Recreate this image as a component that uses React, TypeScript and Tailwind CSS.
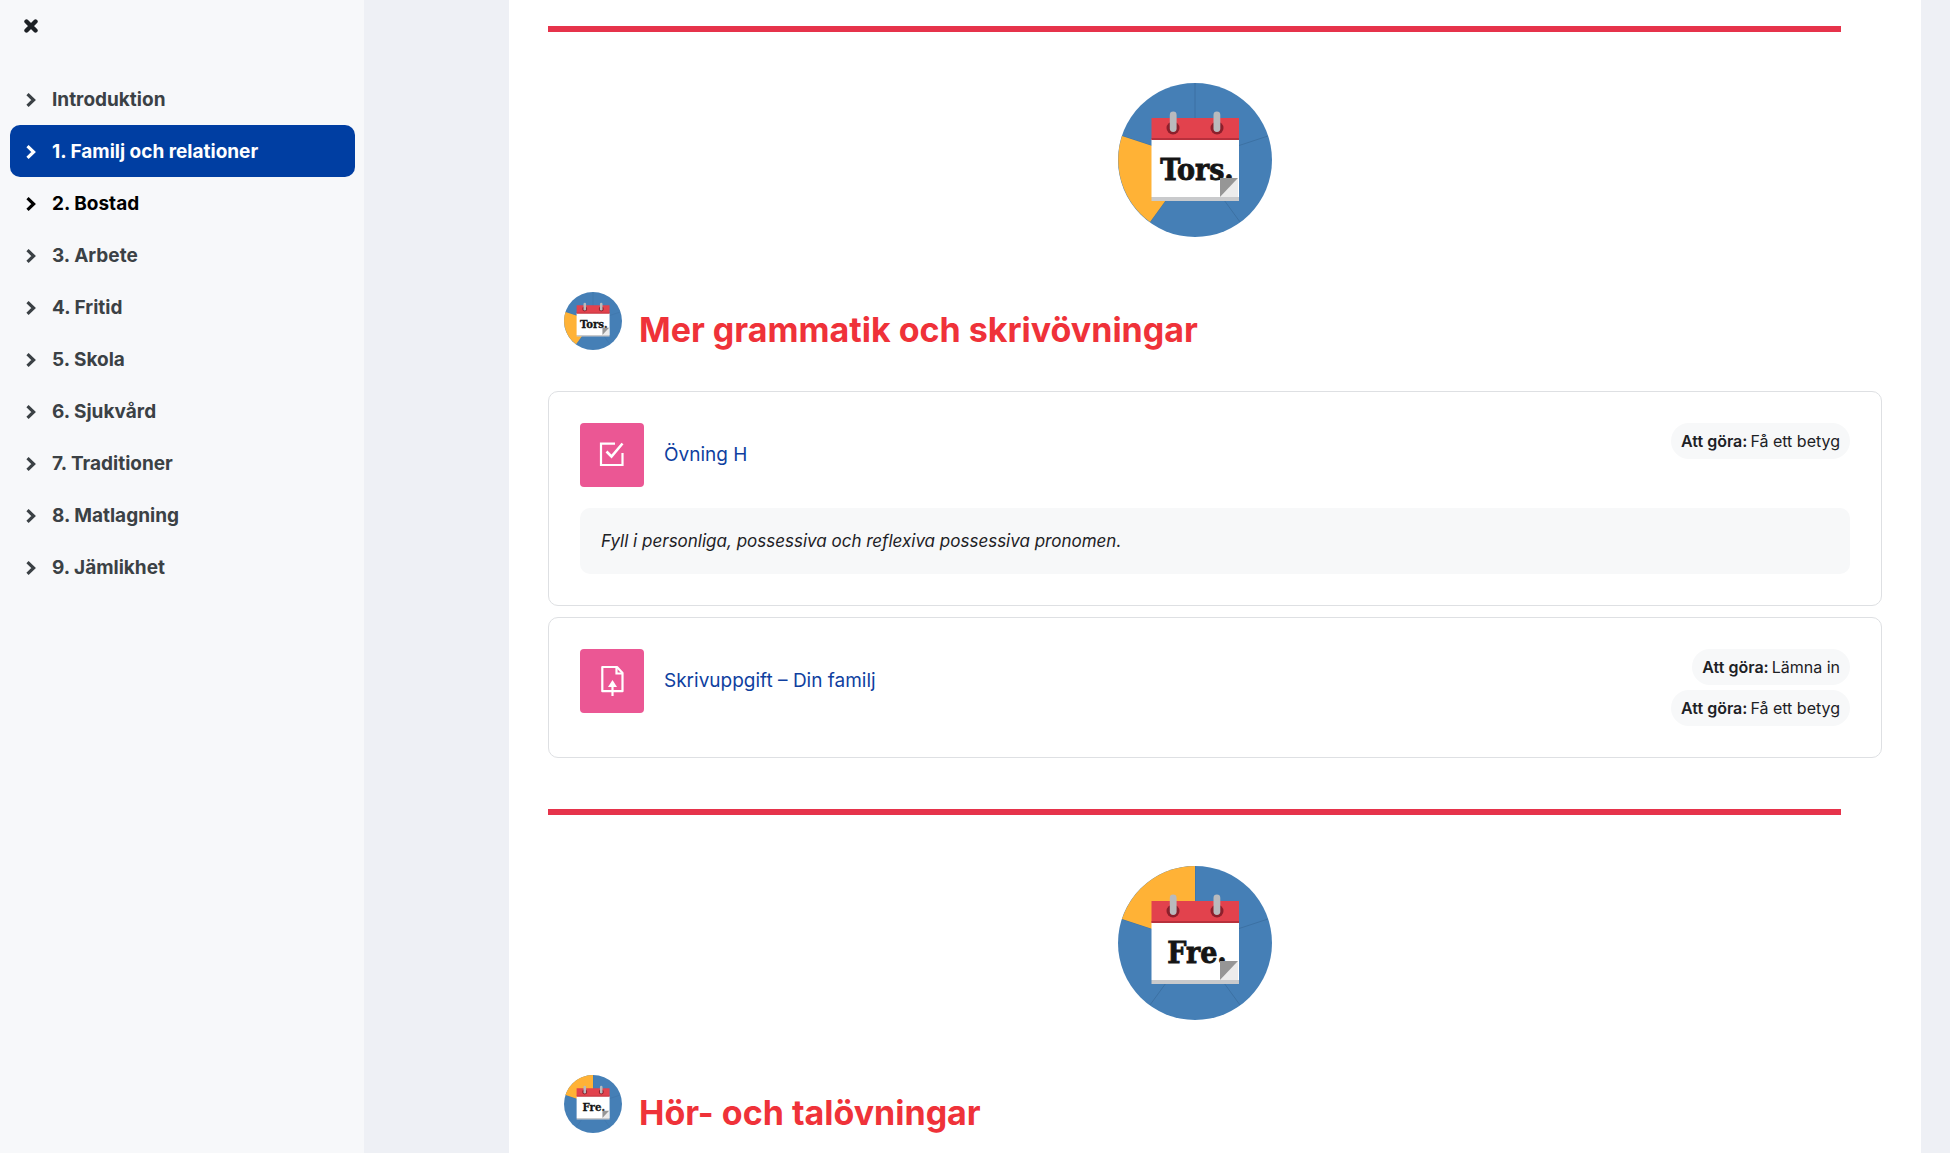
import { ReactNode, useState } from 'react';
import clsx from 'clsx';

type Day = 'Tors.' | 'Fre.';

type Activity = {
	id: number;
	title: string;
	icon: ReactNode;
	description?: string;
	todos: string[];
};

const chapters = [
	'Introduktion',
	'1. Familj och relationer',
	'2. Bostad',
	'3. Arbete',
	'4. Fritid',
	'5. Skola',
	'6. Sjukvård',
	'7. Traditioner',
	'8. Matlagning',
	'9. Jämlikhet',
];

// highlighted slice of the week wheel
const slices: Record<Day, string> = {
	'Tors.': 'M77 77 L4 53 A77 77 0 0 0 32 139 Z',
	'Fre.': 'M77 77 L77 0 A77 77 0 0 0 4 53 Z',
};

const DayWheel = ({ day, className }: { day: Day; className: string }) => (
	<svg viewBox="0 0 154 154" className={className} role="img" aria-label={day}>
		<circle cx="77" cy="77" r="77" fill="#457fb6" />
		<path
			d="M77 77V0M77 77L150 53M77 77L122 139M77 77L32 139M77 77L4 53"
			stroke="#3a6d9e"
			strokeWidth="0.8"
		/>
		<path d={slices[day]} fill="#ffb236" />
		<path d="M33.5 56H121v58H33.5z" fill="#fff" />
		<path d="M33.5 114H121v4H33.5z" fill="#c9cacc" />
		<path d="M33.5 35H121v22H33.5z" fill="#e2424d" />
		<path d="M33.5 55H121v2H33.5z" fill="#b8303c" />
		<circle cx="55" cy="45" r="6.5" fill="#8c1f2b" />
		<circle cx="99" cy="45" r="6.5" fill="#8c1f2b" />
		<rect x="51.8" y="28.5" width="6.8" height="20.5" rx="3.4" fill="#b9babd" />
		<rect x="95.5" y="28.5" width="6.8" height="20.5" rx="3.4" fill="#b9babd" />
		<text
			x={day === 'Tors.' ? 79 : 79}
			y="96.5"
			textAnchor="middle"
			fontSize="30"
			fontWeight="700"
			fill="#151515"
			stroke="#151515"
			strokeWidth="0.8"
			fontFamily="'DejaVu Serif Condensed', 'DejaVu Serif', serif"
		>
			{day}
		</text>
		<path d="M120 95V114H102z" fill="#ececec" />
		<path d="M102 95H120L102 114z" fill="#969696" />
	</svg>
);

const QuizIcon = () => (
	<svg viewBox="0 0 64 64" className="size-16" fill="none" stroke="#fff" strokeWidth="2.2">
		<path d="M35 20.7H21V42H42.5V30" />
		<path d="M26.5 28.5L31.5 33.5L42.5 20.5" strokeWidth="2.6" />
	</svg>
);

const AssignmentIcon = () => (
	<svg viewBox="0 0 64 64" className="size-16" fill="none" stroke="#fff" strokeWidth="2.2">
		<path d="M22.3 18H37L42.5 24V42.2H22.3Z" strokeLinejoin="round" />
		<path d="M36.5 18V24.5H42.5" />
		<path d="M32.5 36V47" />
		<path d="M32.5 31L37 38H28Z" fill="#fff" stroke="none" />
	</svg>
);

const activities: Activity[] = [
	{
		id: 1,
		title: 'Övning H',
		icon: <QuizIcon />,
		description: 'Fyll i personliga, possessiva och reflexiva possessiva pronomen.',
		todos: ['Få ett betyg'],
	},
	{
		id: 2,
		title: 'Skrivuppgift – Din familj',
		icon: <AssignmentIcon />,
		todos: ['Lämna in', 'Få ett betyg'],
	},
];

const Sidebar = () => {
	const [current, setCurrent] = useState(1);

	return (
		<aside className="w-[364px] shrink-0 bg-[#f7f8fa] pr-[9px] pl-[10px]">
			<div className="flex h-[73px] items-start px-[14px] pt-[19px]">
				<button aria-label="Stäng">
					<svg viewBox="0 0 14 14" className="size-[14px]">
						<path
							d="M2.5 2.5L11.5 11.5M11.5 2.5L2.5 11.5"
							stroke="#1d2125"
							strokeWidth="4.4"
							strokeLinecap="round"
						/>
					</svg>
				</button>
			</div>

			<nav>
				<ul>
					{chapters.map((chapter, index) => (
						<li
							key={chapter}
							className={clsx(
								'flex h-[52px] items-center gap-4 rounded-[10px] pt-0.5 pl-4 text-[19px] font-bold',
								index === current && 'bg-[#003ea2] text-white',
								index !== current && (index === 2 ? 'text-black' : 'text-[#3b4145]')
							)}
						>
							<button aria-label={`Visa ${chapter}`}>
								<svg viewBox="0 0 10 14" className="h-[14px] w-[10px]" fill="none">
									<path d="M1.5 1.2L7.6 7L1.5 12.8" stroke="currentColor" strokeWidth="3.2" />
								</svg>
							</button>
							<a href="#" onClick={() => setCurrent(index)}>
								{chapter}
							</a>
						</li>
					))}
				</ul>
			</nav>
		</aside>
	);
};

const ActivityCard = ({ activity }: { activity: Activity }) => (
	<li className="rounded-[10px] border border-[#dee0e3] p-[31px]">
		<div className="flex items-start gap-5">
			<div className="size-16 rounded-[4px] bg-[#eb5794]">{activity.icon}</div>
			<a href="#" className="flex h-16 items-center text-[19px] text-[#0f3f9f]">
				{activity.title}
			</a>
			<div className="ml-auto flex flex-col items-end gap-[5px]">
				{activity.todos.map((todo) => (
					<span
						key={todo}
						className="flex h-9 items-center gap-[3px] rounded-full bg-[#f7f8f9] px-[10px] text-[16px]"
					>
						<strong className="font-semibold">Att göra:</strong>
						{todo}
					</span>
				))}
			</div>
		</div>

		{activity.description && (
			<p className="mt-[21px] rounded-[10px] bg-[#f7f8f9] px-[21px] py-5 text-[17px] leading-[26px] italic">
				{activity.description}
			</p>
		)}
	</li>
);

const DaySection = ({ day, title }: { day: Day; title: string }) => (
	<section>
		<div className="mr-[41px] flex flex-col items-center">
			<hr className="w-full border-t-[6px] border-[#e6334b]" />
			<DayWheel day={day} className="mt-[51px] size-[154px]" />
		</div>
		<h2 className="mt-[55px] flex h-[58px] items-start gap-[17px] pl-4 text-[34px] leading-[76px] font-bold text-[#ef3239]">
			<DayWheel day={day} className="size-[58px]" />
			{title}
		</h2>
	</section>
);

const App = () => (
	<div className="flex min-h-screen bg-[#eef0f5] font-['Inter',sans-serif] text-[#1d2125]">
		<Sidebar />
		<main className="mr-[29px] ml-[145px] grow bg-white px-[39px] pt-[26px] pb-5">
			<DaySection day="Tors." title="Mer grammatik och skrivövningar" />
			<ul className="mt-[41px] mb-[51px] flex flex-col gap-[11px]">
				{activities.map((activity) => (
					<ActivityCard key={activity.id} activity={activity} />
				))}
			</ul>
			<DaySection day="Fre." title="Hör- och talövningar" />
		</main>
	</div>
);

export default App;
